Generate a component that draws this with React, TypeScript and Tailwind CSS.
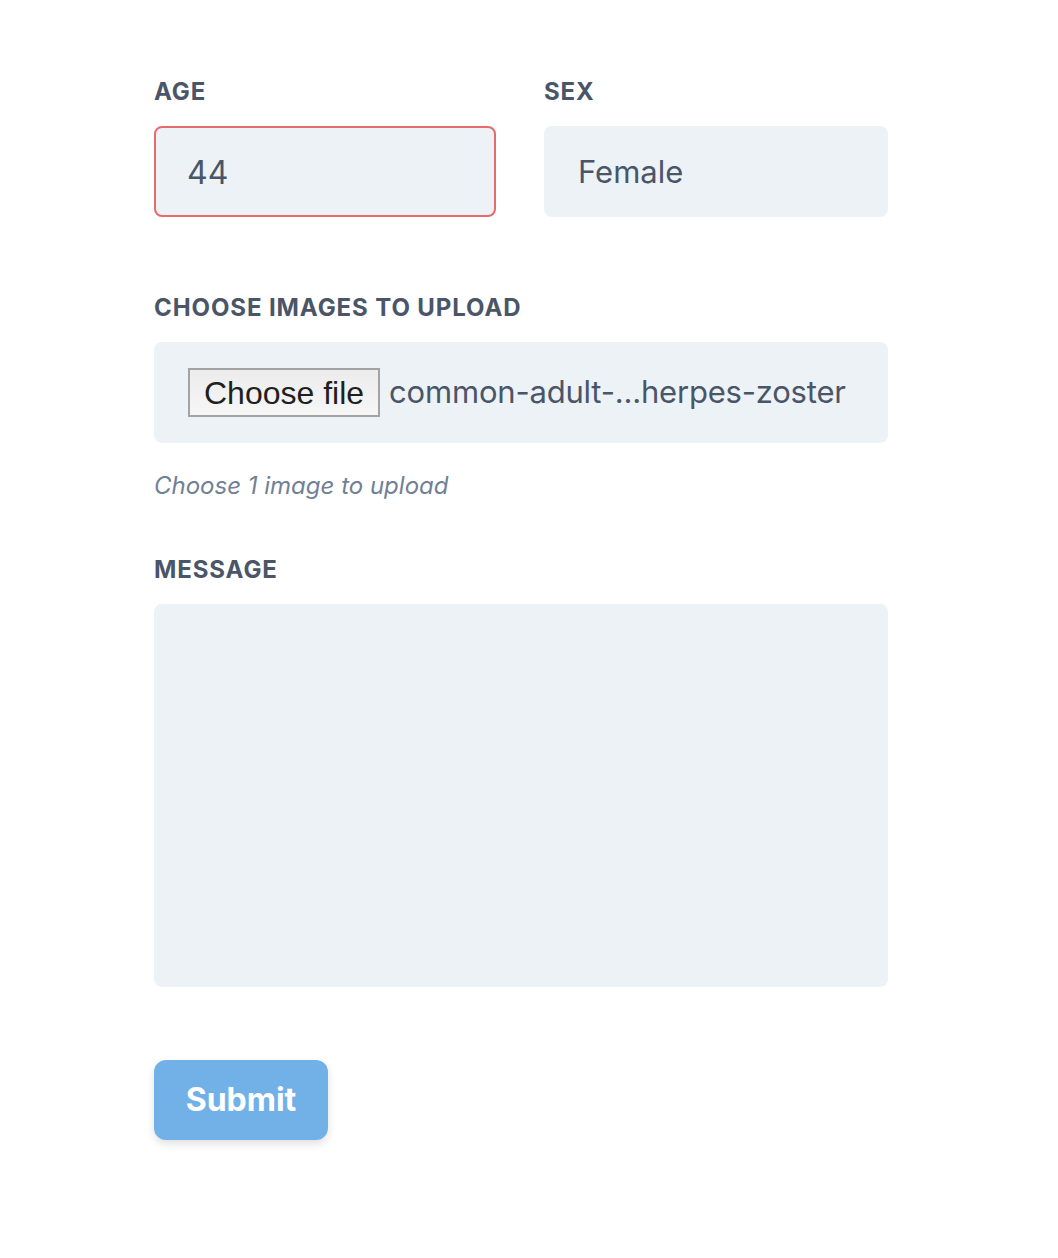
import React from "react";

const labelCls =
  "block uppercase tracking-[0.9px] text-[#4a5568] text-[24px] leading-[32px] font-bold mb-[18px]";

export default function App() {
  return (
    <div
      className="min-h-[1258px] w-[1058px] bg-white"
      style={{ fontFamily: "Inter, 'Noto Sans', sans-serif" }}
    >
      <form className="w-[734px] ml-[154px] pt-[76px]">
        <div className="flex gap-[48px]">
          <div className="w-[342px]">
            <label className={labelCls}>Age</label>
            <div className="h-[91px] rounded-[8px] border-2 border-[#e66b6b] bg-[#edf2f7] flex items-center pt-[2px] px-[31px] text-[32px] text-[#4a5568]">
              44
            </div>
          </div>
          <div className="w-[344px]">
            <label className={labelCls}>Sex</label>
            <div className="h-[91px] rounded-[8px] border-2 border-[#edf2f7] bg-[#edf2f7] flex items-center pt-[2px] px-[32px] text-[31px] text-[#4a5568]">
              Female
            </div>
          </div>
        </div>

        <div className="mt-[75px]">
          <label className={labelCls}>Choose images to upload</label>
          <div className="h-[101px] rounded-[8px] bg-[#edf2f7] flex items-center px-[34px]">
            <span
              className="shrink-0 whitespace-nowrap h-[49px] flex items-center px-[14px] border-2 border-[#a3a3a3] text-[#1f1f1f] text-[32px] bg-gradient-to-b from-[#ececec] to-[#f6f6f6]"
              style={{ fontFamily: "'Liberation Sans', Arial, sans-serif" }}
            >
              Choose file
            </span>
            <span className="ml-[9px] text-[31px] tracking-[-0.2px] text-[#4a5568] whitespace-nowrap">
              common-adult-...herpes-zoster
            </span>
          </div>
          <p className="mt-[27px] text-[24px] leading-[32px] italic text-[#718096]">
            Choose 1 image to upload
          </p>
        </div>

        <div className="mt-[52px]">
          <label className={labelCls}>Message</label>
          <div className="h-[383px] rounded-[8px] bg-[#edf2f7]" />
        </div>

        <div className="mt-[73px]">
          <button
            type="button"
            className="h-[80px] w-[174px] rounded-[12px] bg-[#72b1e8] text-white font-bold text-[32px] leading-[48px] shadow-[0_4px_8px_rgba(0,0,0,0.12)]"
          >
            Submit
          </button>
        </div>
      </form>
    </div>
  );
}
